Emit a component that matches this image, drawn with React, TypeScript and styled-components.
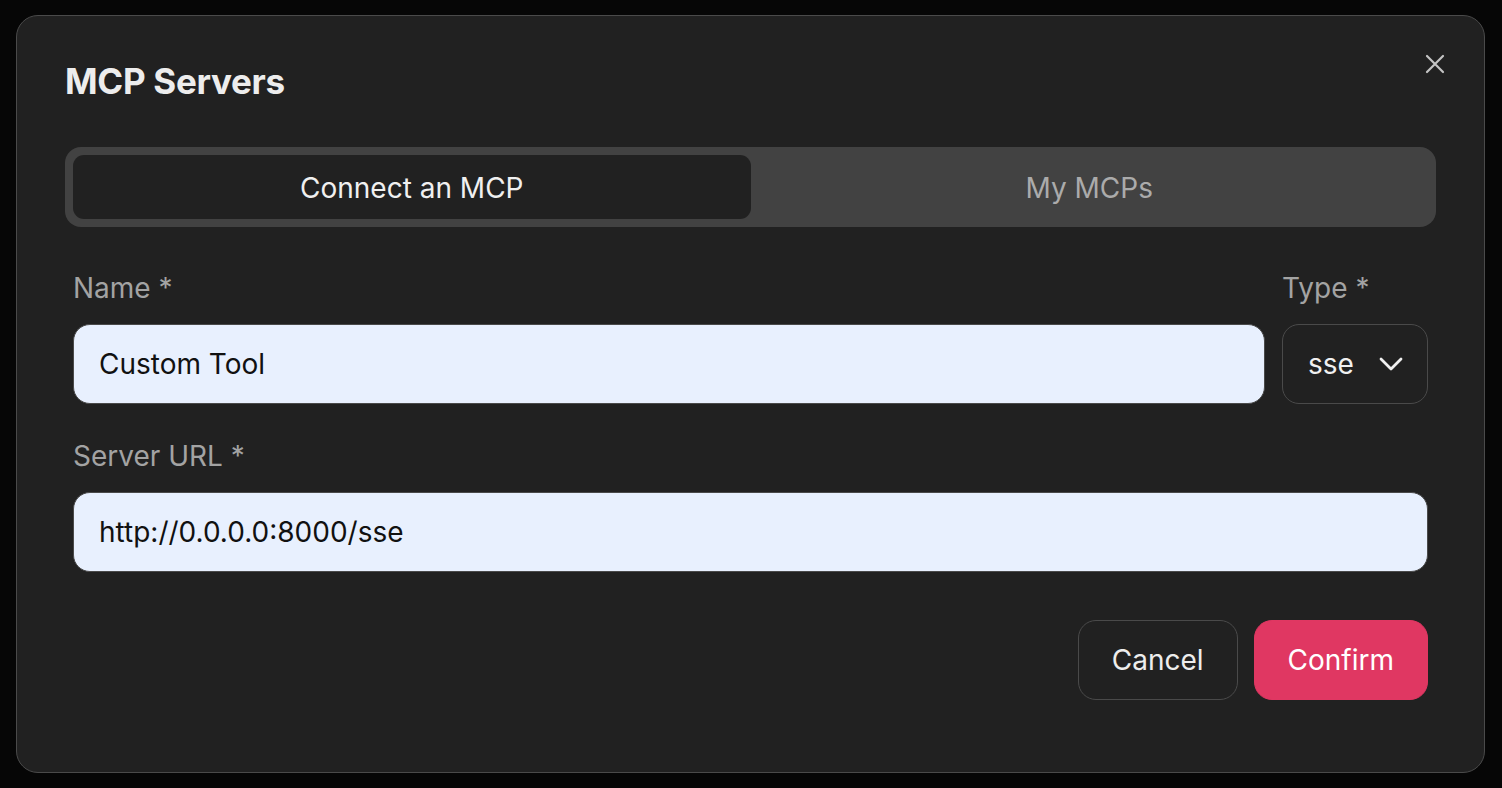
import React, { useState } from "react";
import styled, { createGlobalStyle } from "styled-components";

const GlobalStyle = createGlobalStyle`
  html, body {
    margin: 0;
    padding: 0;
    background: #060606;
  }
  * {
    box-sizing: border-box;
  }
  body {
    font-family: Inter, "Noto Sans", "Liberation Sans", sans-serif;
    -webkit-font-smoothing: antialiased;
  }
`;

const Page = styled.div`
  min-height: 100vh;
  padding: 15px 0 0 16px;
`;

const Dialog = styled.div`
  position: relative;
  width: 1469px;
  height: 758px;
  background: #212121;
  border: 1.5px solid #4a4a4a;
  border-radius: 22px;
  padding: 43px 48px 0 48px;
  display: flex;
  flex-direction: column;
`;

const Title = styled.h2`
  margin: 0;
  font-size: 35px;
  line-height: 44px;
  font-weight: 700;
  color: #ededed;
  letter-spacing: -0.3px;
`;

const CloseButton = styled.button`
  position: absolute;
  top: 34px;
  right: 35px;
  width: 28px;
  height: 28px;
  padding: 0;
  border: none;
  background: transparent;
  display: flex;
  align-items: center;
  justify-content: center;
  cursor: pointer;
`;

const TabBar = styled.div`
  margin-top: 44px;
  height: 80px;
  padding: 8px;
  background: #424242;
  border-radius: 16px;
  display: grid;
  grid-template-columns: 1fr 1fr;
`;

const Tab = styled.button<{ $active?: boolean }>`
  border: none;
  border-radius: 11px;
  background: ${p => (p.$active ? "#212121" : "transparent")};
  color: ${p => (p.$active ? "#f0f0f0" : "#ababab")};
  font-family: inherit;
  font-size: 28px;
  font-weight: 400;
  padding-top: 2px;
  cursor: pointer;
`;

const Form = styled.form`
  padding: 0 8px;
  display: flex;
  flex-direction: column;
`;

const NameRow = styled.div`
  margin-top: 43px;
  display: grid;
  grid-template-columns: 1fr 146px;
  column-gap: 17px;
`;

const Field = styled.div<{ $top?: number }>`
  display: flex;
  flex-direction: column;
  gap: 18px;
  margin-top: ${p => p.$top ?? 0}px;
`;

const Label = styled.label`
  font-size: 28px;
  line-height: 36px;
  color: #a3a3a3;
`;

const TextInput = styled.input`
  height: 80px;
  width: 100%;
  padding: 0 25px;
  border: 1.5px solid #4a4a4a;
  border-radius: 17px;
  background: #e8f0fe;
  color: #111;
  font-family: inherit;
  font-size: 28px;
  outline: none;
`;

const Select = styled.button`
  height: 80px;
  width: 100%;
  padding: 0 24px 0 25px;
  border: 1.5px solid #4a4a4a;
  border-radius: 17px;
  background: transparent;
  color: #f0f0f0;
  font-family: inherit;
  font-size: 28px;
  display: flex;
  align-items: center;
  justify-content: space-between;
  cursor: pointer;
`;

const Actions = styled.div`
  margin-top: 48px;
  display: flex;
  justify-content: flex-end;
  gap: 16px;
`;

const Button = styled.button<{ $primary?: boolean }>`
  height: 80px;
  padding: 0 33px;
  border-radius: 18px;
  border: 1.5px solid ${p => (p.$primary ? "#e03762" : "#4a4a4a")};
  background: ${p => (p.$primary ? "#e03762" : "transparent")};
  color: ${p => (p.$primary ? "#ffffff" : "#ededed")};
  font-family: inherit;
  font-size: 28px;
  cursor: pointer;
`;

const CloseIcon = () => (
  <svg width="20" height="20" viewBox="0 0 20 20" fill="none">
    <path
      d="M2 2 L18 18 M18 2 L2 18"
      stroke="#c4c4c4"
      strokeWidth="2.2"
      strokeLinecap="round"
    />
  </svg>
);

const Chevron = () => (
  <svg width="24" height="14" viewBox="0 0 24 14" fill="none">
    <polyline
      points="2,2 12,12 22,2"
      stroke="#f0f0f0"
      strokeWidth="2.8"
      strokeLinecap="round"
      strokeLinejoin="round"
    />
  </svg>
);

export default function App() {
  const [tab, setTab] = useState<"connect" | "mine">("connect");
  const [name, setName] = useState("Custom Tool");
  const [url, setUrl] = useState("http://0.0.0.0:8000/sse");

  return (
    <Page>
      <GlobalStyle />
      <Dialog>
        <Title>MCP Servers</Title>
        <CloseButton aria-label="Close">
          <CloseIcon />
        </CloseButton>

        <TabBar>
          <Tab $active={tab === "connect"} onClick={() => setTab("connect")}>
            Connect an MCP
          </Tab>
          <Tab $active={tab === "mine"} onClick={() => setTab("mine")}>
            My MCPs
          </Tab>
        </TabBar>

        <Form onSubmit={e => e.preventDefault()}>
          <NameRow>
            <Field>
              <Label>Name *</Label>
              <TextInput value={name} onChange={e => setName(e.target.value)} />
            </Field>
            <Field>
              <Label>Type *</Label>
              <Select type="button">
                sse
                <Chevron />
              </Select>
            </Field>
          </NameRow>

          <Field $top={34}>
            <Label>Server URL *</Label>
            <TextInput value={url} onChange={e => setUrl(e.target.value)} />
          </Field>

          <Actions>
            <Button type="button">Cancel</Button>
            <Button type="submit" $primary>
              Confirm
            </Button>
          </Actions>
        </Form>
      </Dialog>
    </Page>
  );
}
